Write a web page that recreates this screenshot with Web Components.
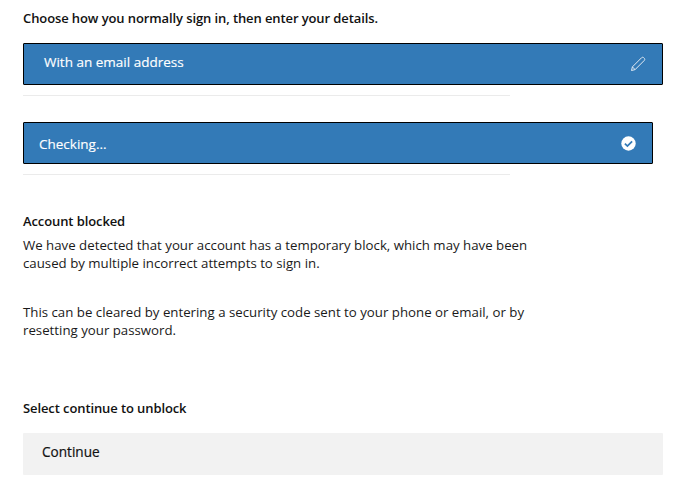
<!DOCTYPE html>
<html>
<head>
<meta charset="utf-8">
<title>Sign in</title>
<style>
  html, body { margin: 0; padding: 0; background: #fff; }
  body { font-family: "Open Sans", "Noto Sans", sans-serif; font-size: 13px; color: #111; overflow: hidden; }
</style>
</head>
<body>
<signin-page>
  <signin-heading style="--top:9px">Choose how you normally sign in, then enter your details.</signin-heading>
  <step-box style="--w:640px;--pad:20px;--top:16px;--icon-right:16px;--shift:-4px;--icon-shift:-1px" icon="pencil">With an email address</step-box>
  <step-box style="--w:630px;--pad:15px;--top:26px;--icon-right:16px;--shift:1px;--icon-shift:0px" icon="check">Checking...</step-box>
  <signin-heading style="--top:37px">Account blocked</signin-heading>
  <signin-para style="--top:6px">We have detected that your account has a temporary block, which may have been caused by multiple incorrect attempts to sign in.</signin-para>
  <signin-para style="--top:30.600px">This can be cleared by entering a security code sent to your phone or email, or by resetting your password.</signin-para>
  <signin-heading style="--top:59.200px">Select continue to unblock</signin-heading>
  <continue-btn>Continue</continue-btn>
</signin-page>

<script>
class SigninPage extends HTMLElement {
  constructor() {
    super();
    this.attachShadow({mode: 'open'}).innerHTML = `
      <style>:host{display:flex;flex-direction:column;align-items:flex-start;padding:0 14px 0 23px;}</style>
      <slot></slot>`;
  }
}

class SigninHeading extends HTMLElement {
  constructor() {
    super();
    this.attachShadow({mode: 'open'}).innerHTML = `
      <style>:host{display:block;margin-top:var(--top,0);font-weight:600;font-size:13px;line-height:18px;letter-spacing:-.1px;color:#111;}</style>
      <slot></slot>`;
  }
}

class SigninPara extends HTMLElement {
  constructor() {
    super();
    this.attachShadow({mode: 'open'}).innerHTML = `
      <style>:host{display:block;margin-top:var(--top,0);width:520px;font-size:13.26px;line-height:18.300px;color:#1a1a1a;}</style>
      <slot></slot>`;
  }
}

const ICONS = {
  pencil: `<svg width="16" height="16" viewBox="0 0 16 16" fill="none" stroke="#e4ecf4" stroke-width="1" stroke-linejoin="round">
    <path d="M1.5 14.5l.9-3.6L11.6 1.7c.6-.6 1.5-.6 2.1 0l.6.6c.6.6.6 1.5 0 2.1L5.100 13.600z"/>
    <path d="M2.400 10.900l2.700 2.700"/></svg>`,
  check: `<svg width="15" height="15" viewBox="0 0 15 15">
    <circle cx="7.500" cy="7.500" r="7.200" fill="#fff"/>
    <path d="M3.900 7.700l2.500 2.400 4.700-4.700" fill="none" stroke="#337ab7" stroke-width="1.800"/></svg>`
};

class StepBox extends HTMLElement {
  constructor() {
    super();
    this.attachShadow({mode: 'open'}).innerHTML = `
      <style>
        :host{display:block;margin-top:var(--top,0);width:var(--w);}
        .box{box-sizing:border-box;height:42px;display:flex;align-items:center;justify-content:space-between;
          padding:0 var(--icon-right) 0 var(--pad);background:#337ab7;border:1px solid #000;border-bottom-width:1.500px;border-radius:1px;color:#fff;font-size:13.5px;}
        .txt{margin-top:var(--shift,0);-webkit-text-stroke:.15px #fff;}
        .ico{display:flex;margin-top:var(--icon-shift,0);}
        hr{border:0;height:1px;background:#ebebeb;margin:10px 0 0;width:487px;}
      </style>
      <div class="box"><span class="txt"><slot></slot></span><span class="ico"></span></div>
      <hr>`;
  }
  connectedCallback() {
    this.shadowRoot.querySelector('.ico').innerHTML = ICONS[this.getAttribute('icon')] || '';
  }
}

class ContinueBtn extends HTMLElement {
  constructor() {
    super();
    this.attachShadow({mode: 'open'}).innerHTML = `
      <style>
        :host{display:flex;align-items:center;box-sizing:border-box;margin-top:16px;width:640px;height:42px;padding:0 0 5px 19px;background:#f2f2f2;border-radius:1px;color:#111;font-size:13.6px;-webkit-text-stroke:.2px #111;cursor:pointer;}
      </style>
      <slot></slot>`;
  }
}

customElements.define('signin-page', SigninPage);
customElements.define('signin-heading', SigninHeading);
customElements.define('signin-para', SigninPara);
customElements.define('step-box', StepBox);
customElements.define('continue-btn', ContinueBtn);
</script>
</body>
</html>
